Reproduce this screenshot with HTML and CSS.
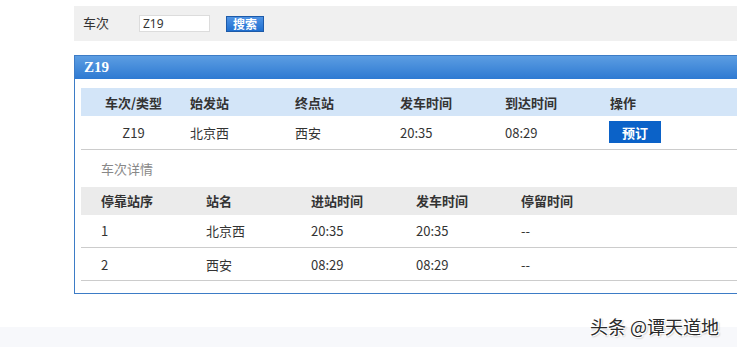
FILE: index.html
```html
<!DOCTYPE html>
<html lang="zh-CN">
<head>
  <meta charset="UTF-8">
  <title>车次查询</title>
  <link rel="stylesheet" href="styles.css">
</head>
<body>
  <div class="page">
    <div class="search-bar">
      <span class="search-label">车次</span>
      <input class="search-input" type="text" value="Z19">
      <button class="search-btn">搜索</button>
    </div>

    <div class="panel">
      <div class="panel-head">Z19</div>
      <div class="panel-body">
        <table class="train-table">
          <tr>
            <th class="center">车次/类型</th>
            <th>始发站</th>
            <th>终点站</th>
            <th>发车时间</th>
            <th>到达时间</th>
            <th class="rest">操作</th>
          </tr>
          <tr>
            <td class="center">Z19</td>
            <td>北京西</td>
            <td>西安</td>
            <td>20:35</td>
            <td>08:29</td>
            <td class="rest"><button class="book-btn">预订</button></td>
          </tr>
        </table>

        <div class="detail-title">车次详情</div>

        <table class="stop-table">
          <tr>
            <th>停靠站序</th>
            <th>站名</th>
            <th>进站时间</th>
            <th>发车时间</th>
            <th>停留时间</th>
            <th class="rest"></th>
          </tr>
          <tr>
            <td>1</td>
            <td>北京西</td>
            <td>20:35</td>
            <td>20:35</td>
            <td>--</td>
            <td class="rest"></td>
          </tr>
          <tr>
            <td>2</td>
            <td>西安</td>
            <td>08:29</td>
            <td>08:29</td>
            <td>--</td>
            <td class="rest"></td>
          </tr>
        </table>
      </div>
    </div>
  </div>

  <div class="footer-strip"></div>
  <div class="watermark">头条 @谭天道地</div>
</body>
</html>
```

FILE: styles.css
```css
html, body {
  margin: 0;
  height: 100%;
  overflow: hidden;
}

body {
  font-family: "Noto Sans CJK SC", "Noto Sans", sans-serif;
  font-size: 13px;
  color: #333;
  background: #fff;
  position: relative;
}

.page {
  padding-left: 74px;
  padding-top: 6px;
}

.search-bar {
  height: 35px;
  background: #f0f0f0;
  display: flex;
  align-items: center;
  padding-left: 9px;
}

.search-label {
  width: 56px;
  line-height: 17px;
  margin-top: -3px;
}

.search-input {
  width: 71px;
  height: 17px;
  box-sizing: border-box;
  border: 1px solid #dcdcdc;
  padding: 0 3px;
  font-family: "Noto Sans", sans-serif;
  font-size: 12px;
  color: #333;
  background: #fff;
}

.search-btn {
  margin-left: 16px;
  width: 38px;
  height: 16px;
  padding: 0;
  border: 1px solid #1d5aa8;
  background: linear-gradient(#4f93e4, #1f6fd0);
  color: #fff;
  font-family: "Noto Sans CJK SC", sans-serif;
  font-weight: bold;
  font-size: 12px;
  line-height: 14px;
}

.panel {
  margin-top: 14px;
  border: 1px solid #3d7cc6;
  border-right: none;
}

.panel-head {
  height: 23px;
  line-height: 23px;
  padding-left: 9px;
  background: linear-gradient(#5c9de2, #2e7ad2);
  color: #fff;
  font-family: "Liberation Serif", serif;
  font-weight: bold;
  font-size: 15px;
}

.panel-body {
  padding: 9px 0 12px 6px;
}

table {
  border-collapse: collapse;
  table-layout: fixed;
  width: 100%;
}

th, td {
  box-sizing: border-box;
  text-align: left;
  padding: 0 0 0 4px;
  width: 105px;
}

th.rest, td.rest {
  width: auto;
}

th {
  height: 28px;
  font-weight: bold;
  color: #333;
}

td {
  height: 33px;
  border-bottom: 1px solid #ccc;
}

.center {
  text-align: center;
  padding: 0;
}

.train-table th {
  background: #d3e5f8;
}

.book-btn {
  display: block;
  width: 52px;
  height: 22px;
  border: none;
  background: #0b62c8;
  color: #fff;
  font-family: "Noto Sans CJK SC", sans-serif;
  font-weight: bold;
  font-size: 13px;
  padding: 0;
  margin-left: -1px;
}

.detail-title {
  height: 37px;
  line-height: 37px;
  padding-left: 20px;
  color: #888;
}

.stop-table th {
  background: #ebebeb;
}

.stop-table th,
.stop-table td {
  padding-left: 20px;
}

.footer-strip {
  position: absolute;
  left: 0;
  right: 0;
  bottom: 0;
  height: 20px;
  background: #f7f8fb;
}

.watermark {
  position: absolute;
  left: 590px;
  top: 313px;
  font-size: 18px;
  color: #2a2a2a;
  text-shadow: 1px 1px 0 #fff, -1px -1px 0 #fff, 1px -1px 0 #fff, -1px 1px 0 #fff, 1px 1px 2px #888;
}
```
